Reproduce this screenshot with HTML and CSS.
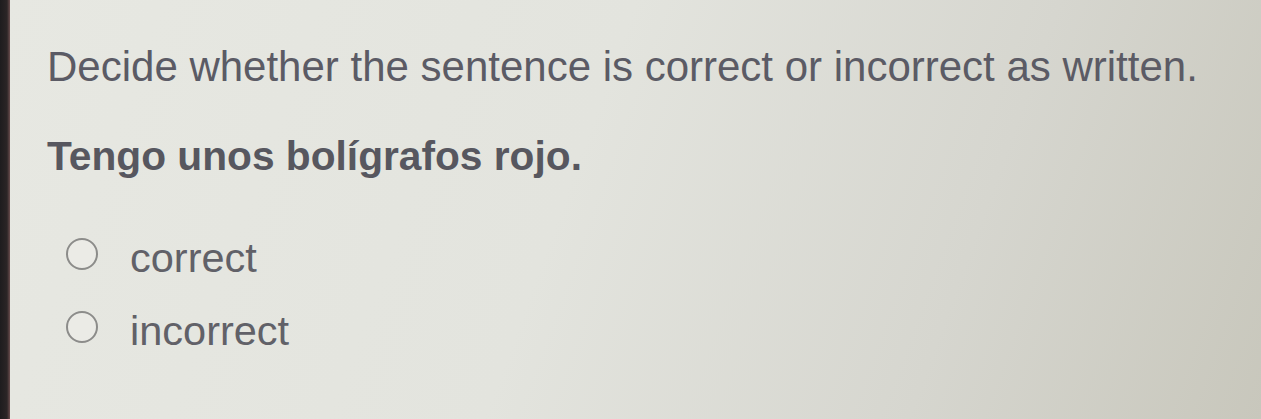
FILE: index.html
```html
<!DOCTYPE html>
<html>
<head>
<meta charset="utf-8">
<link rel="stylesheet" href="styles.css">
</head>
<body>
<div class="screen">
  <div class="edge"></div>
  <div class="content">
    <p class="prompt">Decide whether the sentence is correct or incorrect as written.</p>
    <p class="sentence">Tengo unos bolígrafos rojo.</p>
    <div class="options">
      <label class="option"><span class="radio"></span><span class="label">correct</span></label>
      <label class="option"><span class="radio"></span><span class="label">incorrect</span></label>
    </div>
  </div>
</div>
</body>
</html>
```
FILE: styles.css
```css
html, body {
  margin: 0;
  padding: 0;
}
body {
  width: 1261px;
  height: 419px;
  overflow: hidden;
  font-family: "Liberation Sans", Arial, sans-serif;
}
.screen {
  display: flex;
  width: 1261px;
  height: 419px;
  background: linear-gradient(110deg, #e7e8e2 0%, #e3e4de 45%, #d6d6cf 75%, #c8c7bc 100%);
}
.edge {
  width: 10px;
  flex: none;
  background: linear-gradient(90deg, #1e1c1e 0%, #2b2526 70%, #6b4d4e 100%);
}
.content {
  padding: 43px 0 0 37px;
  color: #5b5b65;
}
.prompt {
  margin: 0;
  font-size: 42px;
  line-height: 48px;
}
.sentence {
  margin: 41px 0 0;
  font-size: 40.7px;
  font-weight: bold;
  line-height: 48px;
  color: #57575f;
}
.options {
  margin-top: 54px;
  display: flex;
  flex-direction: column;
  gap: 25px;
}
.option {
  display: flex;
  align-items: center;
  gap: 32px;
  height: 48px;
}
.radio {
  width: 32px;
  height: 32px;
  margin-left: 19px;
  margin-bottom: 8px;
  border: 2px solid #8c8c8a;
  border-radius: 50%;
  box-sizing: border-box;
  background: #ebebe6;
}
.label {
  font-size: 41.5px;
  line-height: 48px;
  color: #616168;
}
```
